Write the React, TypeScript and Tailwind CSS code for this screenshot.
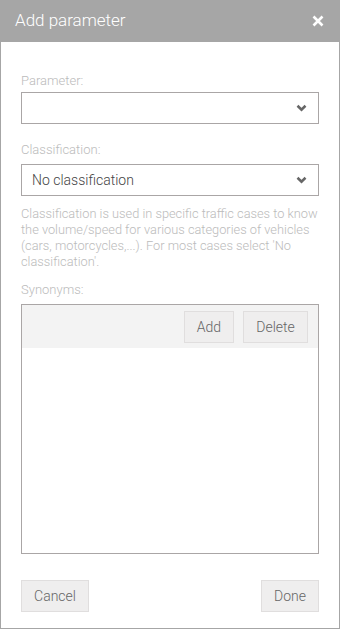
import React from 'react';

const Chevron: React.FC = () => (
  <svg width="11" height="8" viewBox="0 0 11 8" className="shrink-0">
    <path d="M1.5 1.8 L5.5 5.6 L9.5 1.8" fill="none" stroke="#666" strokeWidth="2.6" />
  </svg>
);

const Select: React.FC<{ value?: string }> = ({ value }) => (
  <div className="flex h-8 items-center justify-between border border-[#aaa6a6] bg-white pl-[10px] pr-[11px]">
    <span className="text-[14px] text-[#444]">{value}</span>
    <Chevron />
  </div>
);

const Btn: React.FC<{ children: React.ReactNode; className?: string }> = ({ children, className }) => (
  <button className={`flex h-8 items-center justify-center border border-[#e0dede] bg-[#efeeee] text-[14px] text-[#666] ${className ?? ''}`}>
    {children}
  </button>
);

export default function App() {
  return (
    <div
      className="flex h-[629px] w-[340px] flex-col bg-white font-light"
      style={{ fontFamily: 'Roboto, "Liberation Sans", sans-serif' }}
    >
      {/* Header */}
      <div className="flex h-[42px] shrink-0 items-center justify-between bg-[#a6a6a6] pl-[15px] pr-[16px]">
        <h1 className="text-[17px] font-light text-white">Add parameter</h1>
        <svg width="12" height="12" viewBox="0 0 12 12">
          <path d="M1.5 1.5 L10.5 10.5 M10.5 1.5 L1.5 10.5" stroke="#fff" strokeWidth="2.6" />
        </svg>
      </div>

      {/* Body */}
      <div className="flex flex-1 flex-col border-x border-b border-[#a6a6a6] px-5 pt-[31px] pb-4">
        <label className="mb-[3px] block text-[13px] leading-4 text-[#bbb]">Parameter:</label>
        <Select />

        <label className="mt-[18px] mb-[6px] block text-[13px] leading-4 text-[#bbb]">Classification:</label>
        <Select value="No classification" />

        <p className="mt-[10px] text-[12.8px] leading-4 text-[#bbb]">
          Classification is used in specific traffic cases to know the volume/speed for various categories of vehicles
          (cars, motorcycles,...). For most cases select 'No classification'.
        </p>

        <label className="mt-[12px] mb-[6px] block text-[13px] leading-4 text-[#bbb]">Synonyms:</label>
        <div className="flex h-[250px] flex-col border border-[#aaa6a6]">
          <div className="flex h-[43px] items-start justify-end gap-[9px] bg-[#f3f3f3] pt-[6px] pr-[10px]">
            <Btn className="w-[50px]">Add</Btn>
            <Btn className="w-[65px]">Delete</Btn>
          </div>
          <div className="flex-1 bg-white" />
        </div>

        <div className="mt-auto flex justify-between">
          <Btn className="w-[68px]">Cancel</Btn>
          <Btn className="w-[58px]">Done</Btn>
        </div>
      </div>
    </div>
  );
}
